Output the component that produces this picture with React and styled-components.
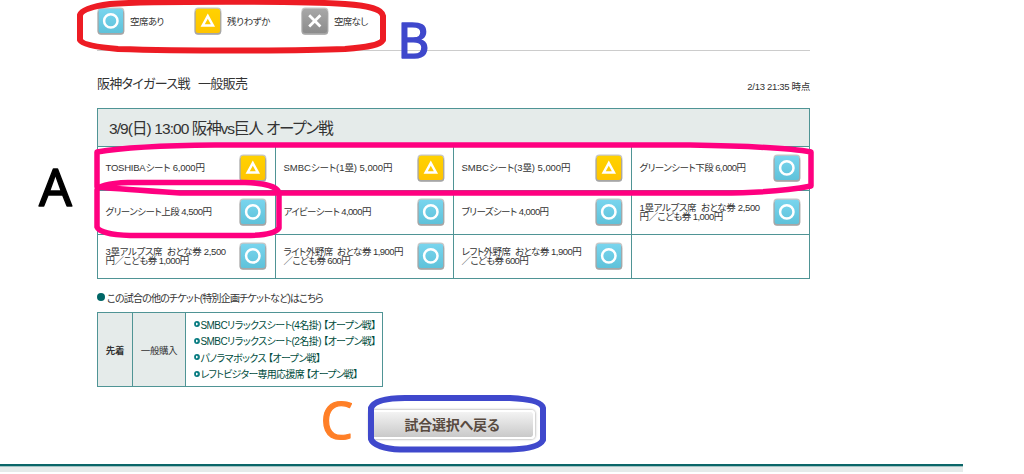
import React from 'react';
import styled, { createGlobalStyle } from 'styled-components';

const GlobalStyle = createGlobalStyle`
  body {
    margin: 0;
    background: #fff;
    overflow: hidden;
  }

  * {
    box-sizing: border-box;
  }
`;

const Page = styled.div`
  position: relative;
  width: 1024px;
  height: 474px;
  overflow: hidden;
  font-family: "Liberation Sans", "Noto Sans CJK JP", sans-serif;
  font-feature-settings: "palt";
  font-size: 9.5px;
  color: #333;
`;

const Content = styled.main`
  width: 713px;
  height: 464px;
  margin-left: 97px;
`;

const Text = styled.span`
  white-space: pre;
  letter-spacing: ${(p) => p.$track || 0}px;
`;

const Legend = styled.div`
  display: flex;
  height: 51px;
  padding-top: 7px;
  border-bottom: 1px solid #ccc;
`;

const LegendItem = styled.div`
  display: flex;
  align-items: center;
  gap: 5px;
  width: ${(p) => p.$width}px;
  height: 27px;
`;

const Mark = styled.svg`
  display: block;
  flex: none;
  width: 28px;
  height: 28px;
`;

const TitleRow = styled.div`
  display: flex;
  justify-content: space-between;
  height: 57px;
  padding-top: 23px;
`;

const Title = styled.h1`
  margin: 0;
  font-size: 13px;
  font-weight: 400;
  line-height: 20px;
  letter-spacing: -0.67px;
  word-spacing: 1.2px;
  white-space: pre;
`;

const Stamp = styled.div`
  padding-top: 6px;
  line-height: 14px;
  letter-spacing: -0.3px;
`;

const SeatTable = styled.section`
  display: grid;
  grid-template-columns: repeat(4, 177px);
  grid-template-rows: 37px 43px 43px 43px;
  gap: 1px;
  padding: 1px;
  background: #4f9495;
`;

const GameName = styled.h2`
  grid-column: 1 / -1;
  display: flex;
  align-items: center;
  margin: 0;
  padding: 0 0 1px 11px;
  background: #e5ebea;
  font-size: 15.5px;
  font-weight: 400;
`;

const Seat = styled.div`
  display: flex;
  align-items: center;
  justify-content: space-between;
  padding: 0 8px 1px 7.5px;
  background: #fff;
  line-height: 9.5px;
`;

const SeatName = styled.div`
  display: flex;
  flex-direction: column;
`;

const Note = styled.p`
  display: flex;
  align-items: center;
  gap: 2px;
  height: 14px;
  margin: 11px 0 8px;
  font-size: 10px;
`;

const Dot = styled.span`
  width: 8px;
  height: 8px;
  border-radius: 50%;
  background: #066;
`;

const OtherTable = styled.section`
  display: grid;
  grid-template-columns: 34px 52px 196px;
  grid-template-rows: 73px;
  gap: 1px;
  width: 286px;
  padding: 1px;
  background: #4f9495;
`;

const HeadCell = styled.div`
  display: flex;
  align-items: center;
  justify-content: center;
  background: #e5ebea;
  font-weight: ${(p) => (p.$bold ? 700 : 400)};
`;

const Links = styled.div`
  display: flex;
  flex-direction: column;
  justify-content: center;
  padding: 0 0 1px 7.5px;
  background: #fff;
`;

const Link = styled.a`
  display: flex;
  align-items: center;
  gap: 1px;
  height: 16.5px;
  font-size: 10px;
  color: #004d40;
`;

const BackButton = styled.button`
  display: block;
  width: 166px;
  height: 29px;
  margin: 23px 0 0 272px;
  padding: 0;
  border: 2px solid #fff;
  border-radius: 4px;
  box-shadow: 0 0 2px 1px rgba(0, 0, 0, 0.22);
  background: linear-gradient(#f3f3f3, #c9c9c9) padding-box;
  color: #584a40;
  font: 700 14px "Noto Sans CJK JP", sans-serif;
  font-feature-settings: "palt";
  line-height: 25px;
`;

const FooterBar = styled.footer`
  width: 963px;
  height: 8px;
  border-top: 2px solid #0a6668;
  background: linear-gradient(#9fc2c2 1px, #e5ebea 1px);
`;

const Notes = styled.svg`
  position: absolute;
  top: 0;
  left: 0;
  font-family: "Noto Sans", "Open Sans", sans-serif;
`;

const fills = {
  open: ['#79d5ee', '#5fc2da'],
  few: ['#ffd200', '#ffc400'],
  none: ['#a8a8a8', '#8c8c8c'],
};

function StatusMark({ type }) {
  return (
    <Mark viewBox="0 0 28 28">
      <defs>
        <linearGradient id={type} x1="0" y1="0" x2="0" y2="1">
          <stop offset="0" stopColor={fills[type][0]} />
          <stop offset="1" stopColor={fills[type][1]} />
        </linearGradient>
      </defs>
      <rect x="0.4" y="0.4" width="27" height="27" rx="4" fill="#c6c6c6" />
      <rect x="0.6" y="3" width="26.6" height="24.7" rx="3.5" fill="#a6a6a6" />
      <rect x="1.7" y="1.7" width="24.4" height="24.2" rx="2.5" fill={`url(#${type})`} />
      {type === 'open' && <circle cx="13.8" cy="13.9" r="6.7" fill="none" stroke="#fff" strokeWidth="2.5" />}
      {type === 'few' && <path d="M13.8 9.2 L18.9 18.4 H8.7 Z" fill="none" stroke="#fff" strokeWidth="2.5" />}
      {type === 'none' && <path d="M8.2 8.2 L19.4 19.4 M19.4 8.2 L8.2 19.4" stroke="#fff" strokeWidth="2.8" />}
    </Mark>
  );
}

function Bullet() {
  return (
    <svg width="6" height="6" viewBox="0 0 6 6">
      <circle cx="3" cy="3" r="2.9" fill="#067b80" />
      <path d="M2 1.5 L4.4 3 L2 4.5 Z" fill="#fff" />
    </svg>
  );
}

const legend = [
  { type: 'open', label: '空席あり', track: -0.6, width: 97 },
  { type: 'few', label: '残りわずか', track: -0.4, width: 107 },
  { type: 'none', label: '空席なし', track: -0.7, width: 80 },
];

// each line is [text, letter spacing]
const seats = [
  { type: 'few', lines: [['TOSHIBAシート 6,000円', -0.22]] },
  { type: 'few', lines: [['SMBCシート(1塁) 5,000円', -0.05]] },
  { type: 'few', lines: [['SMBCシート(3塁) 5,000円', -0.05]] },
  { type: 'open', lines: [['グリーンシート下段 6,000円', -0.5]] },
  { type: 'open', lines: [['グリーンシート上段 4,500円', -0.5]] },
  { type: 'open', lines: [['アイビーシート 4,000円', -0.62]] },
  { type: 'open', lines: [['ブリーズシート 4,000円', -0.58]] },
  { type: 'open', lines: [['1塁アルプス席  おとな券 2,500', -0.35], ['円／こども券 1,000円', -0.55]] },
  { type: 'open', lines: [['3塁アルプス席  おとな券 2,500', -0.35], ['円／こども券 1,000円', -0.55]] },
  { type: 'open', lines: [['ライト外野席  おとな券 1,900円', -0.53], ['／こども券 600円', -0.65]] },
  { type: 'open', lines: [['レフト外野席  おとな券 1,900円', -0.5], ['／こども券 600円', -0.65]] },
  { lines: [] },
];

const links = [
  ['SMBCリラックスシート(4名掛) 【オープン戦】', -0.58],
  ['SMBCリラックスシート(2名掛) 【オープン戦】', -0.58],
  ['パノラマボックス 【オープン戦】', -0.6],
  ['レフトビジター専用応援席 【オープン戦】', -0.73],
];

function App() {
  return (
    <Page>
      <GlobalStyle />
      <Content>
        <Legend>
          {legend.map((item) => (
            <LegendItem key={item.type} $width={item.width}>
              <StatusMark type={item.type} />
              <Text $track={item.track}>{item.label}</Text>
            </LegendItem>
          ))}
        </Legend>

        <TitleRow>
          <Title>阪神タイガース戦  一般販売</Title>
          <Stamp>2/13 21:35 時点</Stamp>
        </TitleRow>

        <SeatTable>
          <GameName>
            <Text $track={-0.92}>3/9(日) 13:00 </Text>
            <Text $track={-1.1}>阪神vs巨人 オープン戦</Text>
          </GameName>
          {seats.map((seat, i) => (
            <Seat key={i}>
              <SeatName>
                {seat.lines.map(([text, track]) => (
                  <Text key={text} $track={track}>{text}</Text>
                ))}
              </SeatName>
              {seat.type && <StatusMark type={seat.type} />}
            </Seat>
          ))}
        </SeatTable>

        <Note>
          <Dot />
          <Text $track={-0.8}>この試合の他のチケット(特別企画チケットなど)はこちら</Text>
        </Note>

        <OtherTable>
          <HeadCell $bold>
            <Text $track={-0.2}>先着</Text>
          </HeadCell>
          <HeadCell>
            <Text $track={-0.4}>一般購入</Text>
          </HeadCell>
          <Links>
            {links.map(([text, track]) => (
              <Link key={text}>
                <Bullet />
                <Text $track={track}>{text}</Text>
              </Link>
            ))}
          </Links>
        </OtherTable>

        <BackButton>
          <Text $track={-0.22}>試合選択へ戻る</Text>
        </BackButton>
      </Content>
      <FooterBar />

      {/* hand-drawn markers over the page */}
      <Notes width="1024" height="474" fill="none" strokeLinejoin="round">
        <path
          d="M80 15 C82 9 95 6 110 4 C150 1 300 1 345 4 C370 6 382 9 383 16 L383 40 C380 45 370 47 345 49 C300 51 180 51 118 49 C95 47 82 44 80 40 Z"
          stroke="#ed1c24"
          strokeWidth="6"
        />
        <path
          d="M97 152 C120 148 160 145.5 215 145 L690 145 C750 146 790 148 811 152 L811 186 C790 190 760 193 720 193 L180 193 C150 191 120 189 97 187 Z"
          stroke="#ff0080"
          strokeWidth="5.5"
        />
        <path
          d="M97 190 C99 185 112 183 128 182.5 L245 182.5 C265 183 278 187 279 193 L279 228 C276 233 265 235.5 245 235.5 L130 235.5 C112 235 99 232 97 227 Z"
          stroke="#ff0080"
          strokeWidth="5.5"
        />
        <path
          d="M371 408 C374 401 385 398 405 398 L510 398 C530 399 542 402 543 408 L543 440 C540 446 530 449 510 449.5 L400 449.5 C385 449 373 445 371 439 Z"
          stroke="#3f48cc"
          strokeWidth="6"
        />
        <text x="39" y="205.5" fontSize="51.5" fill="#000" stroke="#000" strokeWidth="1.4">A</text>
        <text x="397.5" y="57.5" fontSize="49" fill="#3f48cc" stroke="#3f48cc" strokeWidth="1.6">B</text>
        <text x="320.5" y="439" fontSize="51.5" fill="#ff7f27" stroke="#ff7f27" strokeWidth="1.2">C</text>
      </Notes>
    </Page>
  );
}

export default App;
